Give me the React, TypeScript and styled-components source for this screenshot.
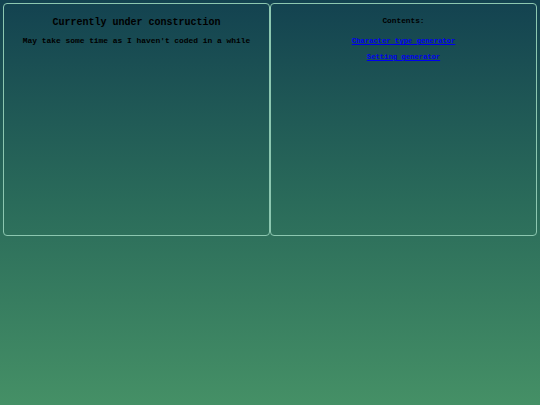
import React from "react";
import styled, { createGlobalStyle } from "styled-components";

const Global = createGlobalStyle`
  html, body { margin: 0; padding: 0; }
  body {
    min-height: 405px;
    background: linear-gradient(to bottom, #134250 0%, #2a6b5a 50%, #459066 100%);
    font-family: "Liberation Mono", "Courier New", monospace;
  }
`;

const Page = styled.div`
  padding: 3px;
  display: grid;
  grid-template-columns: 267px 267px;
  height: 233px;
`;

const Panel = styled.section`
  border: 1px solid #8cc7b0;
  border-radius: 4px;
  text-align: center;
  color: #000;
  font-weight: bold;
`;

const Title = styled.h1`
  margin: 12px 0 0;
  font-size: 10px;
  line-height: 14px;
  font-weight: bold;
`;

const Note = styled.p`
  margin: 6px 0 0;
  font-size: 7.9px;
  line-height: 10px;
`;

const ContentsLabel = styled.p`
  margin: 12px 0 0;
  font-size: 7.8px;
  line-height: 10px;
`;

const LinkList = styled.div`
  margin-top: 10px;
  display: flex;
  flex-direction: column;
  align-items: center;
  gap: 6px;
`;

const Link = styled.a`
  color: #0000ee;
  font-size: 7.2px;
  line-height: 10px;
  text-decoration: underline;
`;

export default function App() {
  return (
    <>
      <Global />
      <Page>
        <Panel>
          <Title>Currently under construction</Title>
          <Note>May take some time as I haven't coded in a while</Note>
        </Panel>
        <Panel>
          <ContentsLabel>Contents:</ContentsLabel>
          <LinkList>
            <Link href="#">Character type generator</Link>
            <Link href="#">Setting generator</Link>
          </LinkList>
        </Panel>
      </Page>
    </>
  );
}
